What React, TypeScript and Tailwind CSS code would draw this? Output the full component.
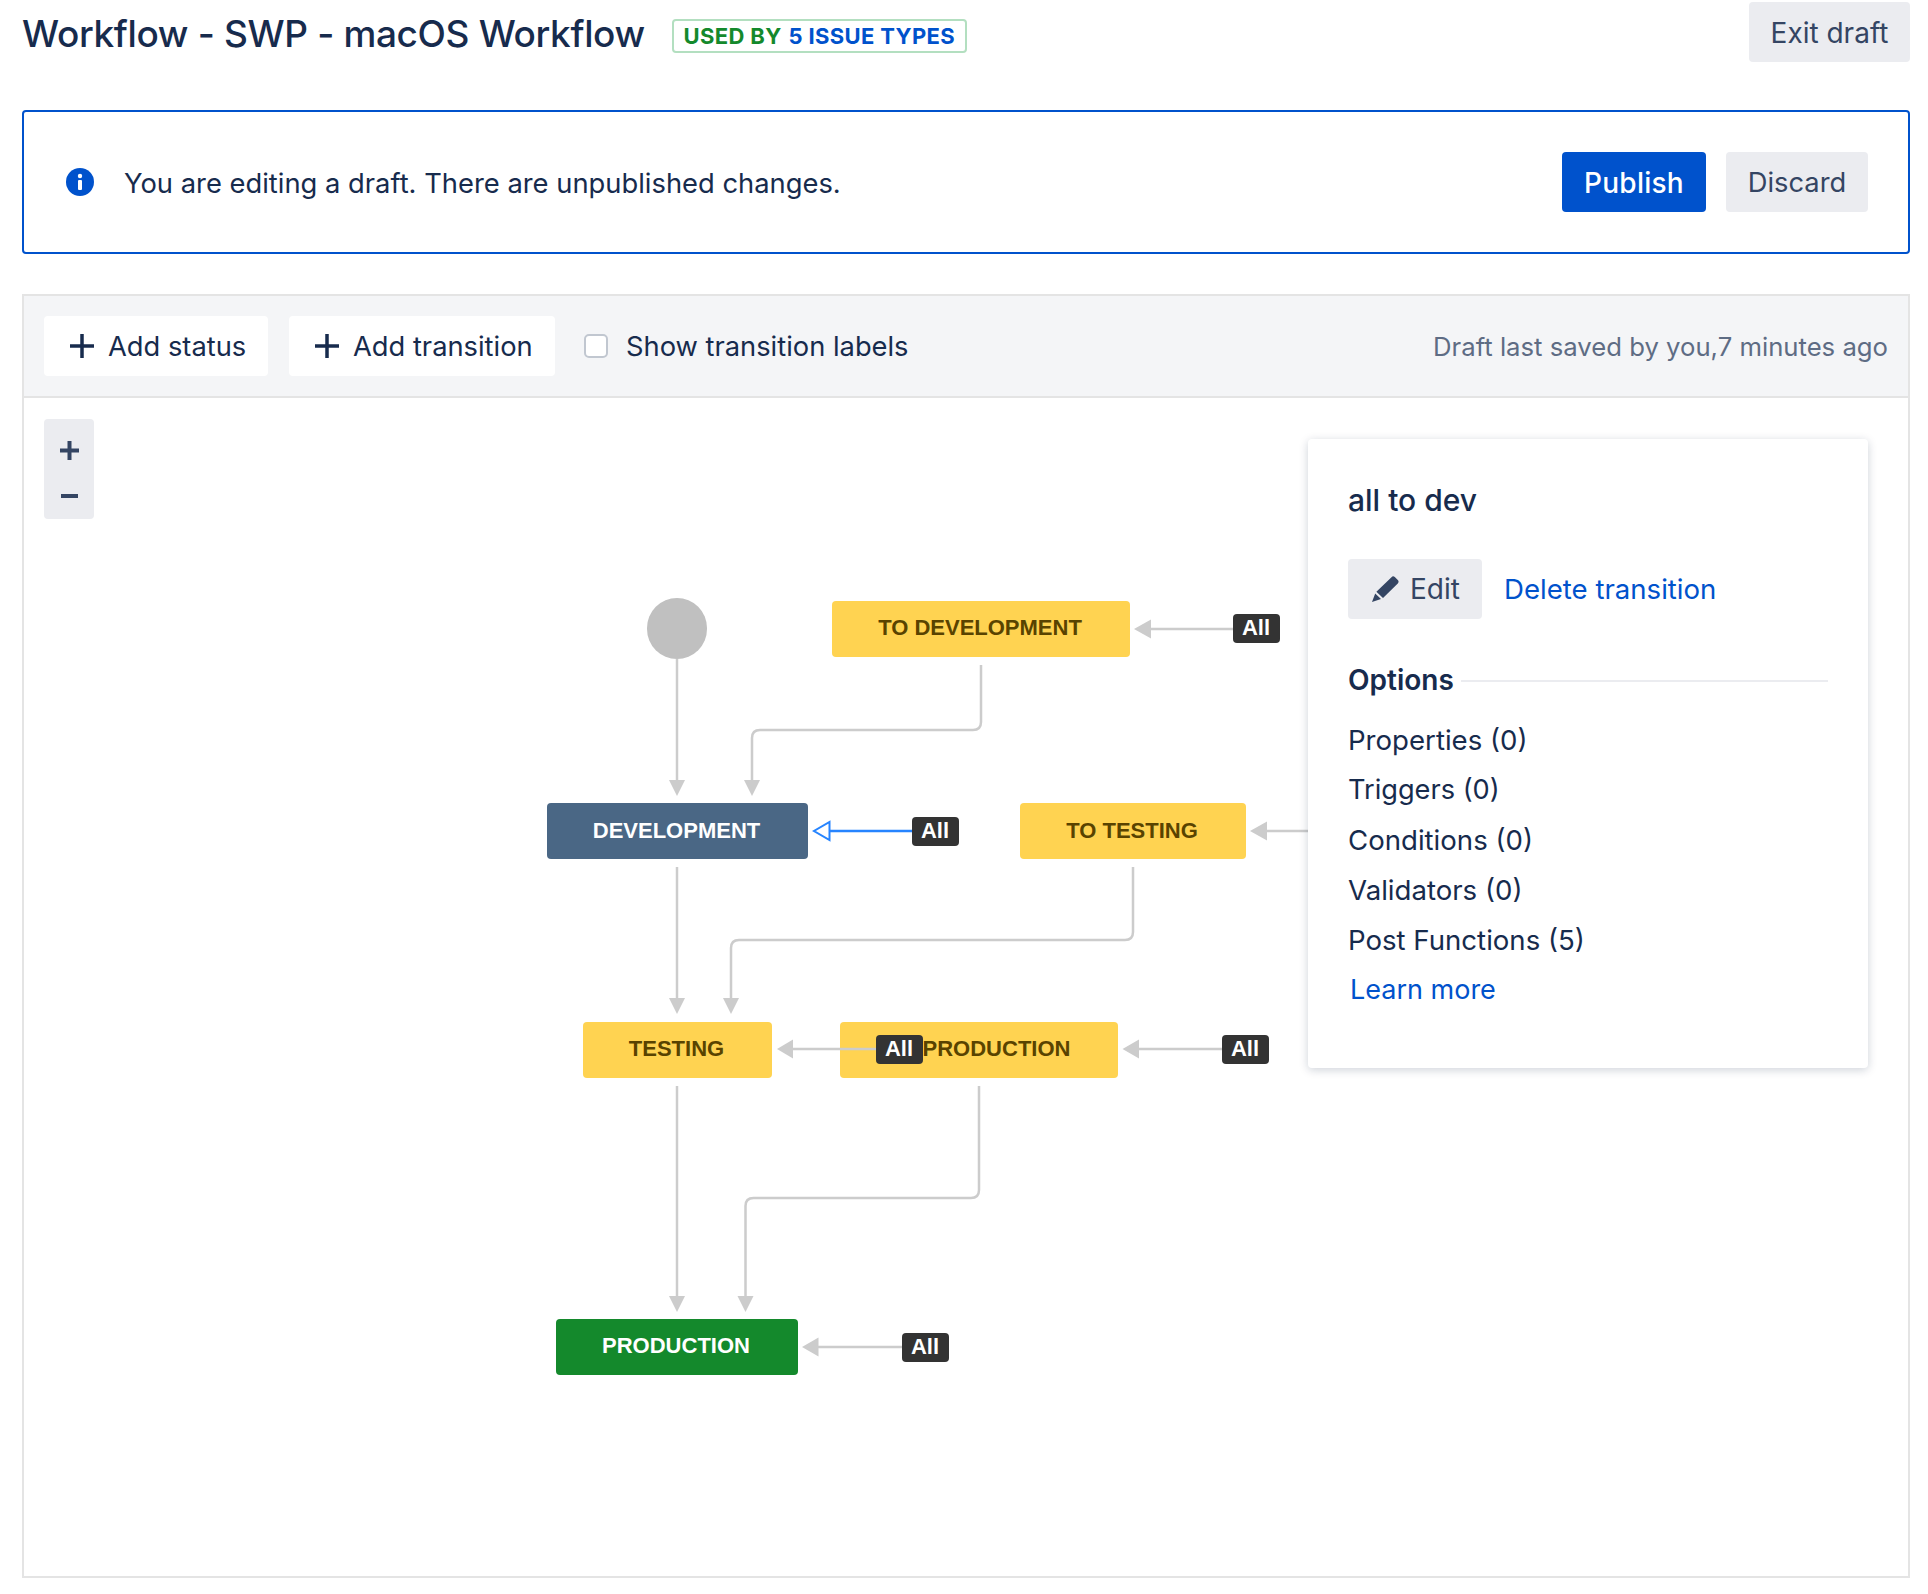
const FONT = "font-['Inter',sans-serif]"

function Plus() {
  return (
    <svg width="24" height="24" viewBox="0 0 24 24" className="text-[#172b4d] shrink-0">
      <path d="M10.25 0h3.5v10.25H24v3.5H13.75V24h-3.5V13.75H0v-3.5h10.25z" fill="currentColor" />
    </svg>
  )
}

function StatusNode({ className, label }: { className: string; label: string }) {
  return (
    <div className={`absolute flex items-center justify-center rounded-[4px] pb-[2px] font-['Liberation_Sans',sans-serif] text-[22px] font-bold ${className}`}>
      {label}
    </div>
  )
}

function AllBadge({ className }: { className: string }) {
  return (
    <div className={`absolute flex h-[29px] w-[47px] items-center justify-center rounded-[4px] bg-[#333333] pb-[2px] pr-[1px] font-['Liberation_Sans',sans-serif] text-[22px] font-bold text-white ${className}`}>
      All
    </div>
  )
}

function Connectors() {
  const lines = [
    'M677 659V782',
    'M981 665V722Q981 730 973 730H760Q752 730 752 738V782',
    'M1233 629H1148',
    'M1308 831H1265',
    'M677 867V1000',
    'M1133 867V932Q1133 940 1125 940H739Q731 940 731 948V1000',
    'M876 1049H791',
    'M1222 1049H1137',
    'M677 1086V1298',
    'M979 1086V1190Q979 1198 971 1198H753.5Q745.5 1198 745.5 1206V1298',
    'M902 1347H816',
  ]
  const heads = [
    'M669 780H685L677 796Z',
    'M744 780H760L752 796Z',
    'M1151 619.5V638.5L1134 629Z',
    'M1267 821.5V840.5L1250 831Z',
    'M669 998H685L677 1014Z',
    'M723 998H739L731 1014Z',
    'M793 1039.5V1058.5L777 1049Z',
    'M1139 1039.5V1058.5L1122.5 1049Z',
    'M669 1296H685L677 1312Z',
    'M737.5 1296H753.5L745.5 1312Z',
    'M818.5 1337.5V1356.5L802 1347Z',
  ]
  return (
    <svg className="absolute left-0 top-0" width="1884" height="1181" viewBox="24 397 1884 1181" fill="none">
      {lines.map((d) => (
        <path key={d} d={d} stroke="#cccccc" strokeWidth="2.5" />
      ))}
      {heads.map((d) => (
        <path key={d} d={d} fill="#cccccc" />
      ))}
      <path d="M912 831H829" stroke="#2684ff" strokeWidth="2.5" />
      <path d="M829.5 822V840L814 831Z" fill="#ffffff" stroke="#2684ff" strokeWidth="2" />
    </svg>
  )
}

function OptionsPanel() {
  return (
    <div className="absolute left-[1284px] top-[42px] h-[629px] w-[560px] rounded-[4px] bg-white pl-[40px] pr-[40px] pt-[41px] text-[#172b4d] shadow-[0_2px_10px_rgba(9,30,66,0.2)]">
      <div className="h-[40px] text-[30px] font-medium leading-[40px]">all to dev</div>
      <div className="mt-[39px] flex items-center">
        <button className="flex h-[60px] w-[134px] items-center justify-center gap-[11px] rounded-[4px] bg-[#ebecf0] pl-[2px] text-[28px] text-[#344563]">
          <svg width="27" height="26" viewBox="0 0 27 26">
            <path d="M19.5 1.2a2.4 2.4 0 0 1 3.3-.1l3 3a2.4 2.4 0 0 1 0 3.3L11 22l-6.6-6.2zM3.2 17.4l5.8 5.6L0 26z" fill="#344563" />
          </svg>
          Edit
        </button>
        <a className="ml-[22px] pt-[2px] text-[27.6px] text-[#0052cc]">Delete transition</a>
      </div>
      <div className="mt-[41px] flex items-center gap-[7px]">
        <span className="text-[28px] font-semibold leading-[40px]">Options</span>
        <div className="mt-[2px] h-[2px] flex-1 bg-[#ebecf0]" />
      </div>
      <ul className="mt-[15px] text-[27.6px] leading-[50px]">
        <li>Properties (0)</li>
        <li className="text-[27.2px]">Triggers (0)</li>
        <li>Conditions (0)</li>
        <li>Validators (0)</li>
        <li>Post Functions (5)</li>
        <li className="pl-[2px] text-[27px] text-[#0052cc]">Learn more</li>
      </ul>
    </div>
  )
}

export default function App() {
  return (
    <div className={`h-[1594px] w-[1928px] bg-white pl-[22px] pr-[18px] pt-[2px] text-[#172b4d] ${FONT}`}>
      <header className="flex h-[60px] items-start">
        <h1 className="mt-[10px] text-[37px] font-medium leading-[44px] tracking-[-0.35px]">Workflow - SWP - macOS Workflow</h1>
        <div className="ml-[27px] mt-[17px] flex h-[34px] w-[295px] items-center justify-center gap-[7px] rounded-[4px] border-2 border-[#b3dfc0] text-[22px] font-bold uppercase tracking-[0.35px]">
          <span className="text-[#14892c]">Used by</span>
          <span className="text-[#0052cc]">5 issue types</span>
        </div>
        <button className="ml-auto h-[60px] w-[161px] rounded-[4px] bg-[#ebecf0] pt-[2px] text-[28px] text-[#344563]">Exit draft</button>
      </header>

      <section className="mt-[48px] flex h-[144px] items-center rounded-[4px] border-2 border-[#0052cc] pl-[42px] pr-[40px]">
        <svg width="28" height="28" viewBox="0 0 28 28" className="shrink-0">
          <circle cx="14" cy="14" r="14" fill="#0052cc" />
          <rect x="12" y="12" width="4" height="10" rx="1" fill="#ffffff" />
          <circle cx="14" cy="8" r="2.2" fill="#ffffff" />
        </svg>
        <p className="ml-[30px] pt-[3px] text-[27.35px]">You are editing a draft. There are unpublished changes.</p>
        <button className="ml-auto h-[60px] w-[144px] rounded-[4px] bg-[#0052cc] pt-[2px] text-[28px] font-medium tracking-[0.25px] text-white">Publish</button>
        <button className="ml-[20px] h-[60px] w-[142px] rounded-[4px] bg-[#ebecf0] pt-[2px] text-[27.3px] text-[#344563]">Discard</button>
      </section>

      <section className="mt-[40px] flex h-[104px] items-center border-2 border-[#e4e4e4] bg-[#f4f5f7] pl-[20px] pr-[20px]">
        <button className="flex h-[60px] w-[224px] items-center justify-start gap-[14px] rounded-[4px] bg-white pl-[26px] text-[27.3px]">
          <Plus />
          <span className="pt-[3px]">Add status</span>
        </button>
        <button className="ml-[21px] flex h-[60px] w-[266px] items-center justify-start gap-[14px] rounded-[4px] bg-white pl-[26px] text-[27.3px]">
          <Plus />
          <span className="pt-[3px]">Add transition</span>
        </button>
        <label className="ml-[29px] flex items-center gap-[18px] text-[27.3px]">
          <span className="h-[24px] w-[24px] rounded-[5px] border-2 border-[#c1c7d0] bg-white" />
          <span className="pt-[3px]">Show transition labels</span>
        </label>
        <span className="ml-auto pt-[3px] text-[25.7px] text-[#5e6c84]">Draft last saved by you,7 minutes ago</span>
      </section>

      <main className="relative -mt-px h-[1181px] border-x-2 border-b-2 border-[#e4e4e4]">
        <div className="absolute left-[20px] top-[22px] flex h-[100px] w-[50px] flex-col items-center justify-center gap-[34px] rounded-[4px] bg-[#ebecf0]">
          <svg width="19" height="19" viewBox="0 0 19 19"><path d="M7.5 0h4v7.5H19v4h-7.5V19h-4v-7.5H0v-4h7.5z" fill="#344563" /></svg>
          <svg width="17" height="4" viewBox="0 0 17 4"><rect width="17" height="4" fill="#344563" /></svg>
        </div>

        <div className="absolute left-[622.5px] top-[201px] h-[60.5px] w-[60.5px] rounded-full bg-[#c0c0c0]" />
        <StatusNode className="left-[808px] top-[203.5px] h-[56px] w-[298px] bg-[#ffd351] pr-[2px] text-[#594300]" label="TO DEVELOPMENT" />
        <StatusNode className="left-[523px] top-[406px] h-[56px] w-[261px] bg-[#4a6785] pr-[2px] text-white" label="DEVELOPMENT" />
        <StatusNode className="left-[996px] top-[406px] h-[56px] w-[226px] bg-[#ffd351] pr-[2px] text-[#594300]" label="TO TESTING" />
        <StatusNode className="left-[559px] top-[624.5px] h-[56px] w-[189px] bg-[#ffd351] pr-[2px] text-[#594300]" label="TESTING" />
        <StatusNode className="left-[816px] top-[624.5px] h-[56px] w-[278px] bg-[#ffd351] pl-[35px] text-[#594300]" label="PRODUCTION" />
        <StatusNode className="left-[532px] top-[921.5px] h-[56px] w-[242px] bg-[#14892c] pr-[2px] text-white" label="PRODUCTION" />

        <Connectors />

        <AllBadge className="left-[1209px] top-[217px]" />
        <AllBadge className="left-[888px] top-[420px]" />
        <AllBadge className="left-[852px] top-[638px]" />
        <AllBadge className="left-[1198px] top-[638px]" />
        <AllBadge className="left-[878px] top-[936px]" />

        <OptionsPanel />
      </main>
    </div>
  )
}
